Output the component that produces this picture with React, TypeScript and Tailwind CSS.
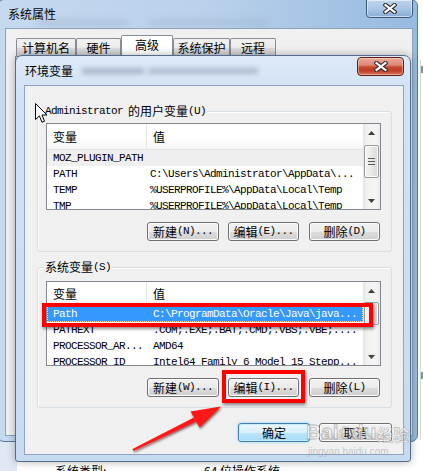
import React from "react";

const CJK = "font-['Noto_Sans_CJK_SC','Noto_Sans',sans-serif]";
const MONO = "font-['Liberation_Mono','DejaVu_Sans_Mono',monospace] text-[11px] tracking-[-0.6px]";

function XGlyph() {
  return (
    <svg width="14" height="11" viewBox="0 0 14 11">
      <path d="M2.5 2 L11.5 9 M11.5 2 L2.5 9" stroke="#2d2d2d" strokeWidth="4.2" strokeLinecap="square" />
      <path d="M2.5 2 L11.5 9 M11.5 2 L2.5 9" stroke="#ffffff" strokeWidth="2.2" strokeLinecap="square" />
    </svg>
  );
}

function Arrow({ up }: { up?: boolean }) {
  return (
    <svg width="7" height="4" viewBox="0 0 7 4">
      <path d={up ? "M0 4L3.5 0L7 4Z" : "M0 0L3.5 4L7 0Z"} fill="#3f3f3f" />
    </svg>
  );
}

function Scrollbar({ thumb, grip }: { thumb: string; grip?: boolean }) {
  return (
    <div className="w-[17px] h-full flex flex-col bg-[linear-gradient(90deg,#e4e4e4,#f2f2f2_25%,#f5f5f5_75%,#eaeaea)]">
      <div className="h-[17px] flex items-center justify-center">
        <Arrow up />
      </div>
      <div
        className={`${thumb} ml-[1px] w-[15px] rounded-[2px] border border-[#9a9a9a] bg-[linear-gradient(90deg,#f4f4f4,#e9e9e9_50%,#d8d8d8)] shadow-[inset_0_0_0_1px_#fbfbfb] flex flex-col items-center justify-center gap-[2px]`}
      >
        {grip && (
          <>
            <div className="w-[7px] h-px bg-[#5a5a5a]" />
            <div className="w-[7px] h-px bg-[#5a5a5a]" />
            <div className="w-[7px] h-px bg-[#5a5a5a]" />
          </>
        )}
      </div>
      <div className="mt-auto h-[17px] flex items-center justify-center">
        <Arrow />
      </div>
    </div>
  );
}

function Header({ h }: { h: string }) {
  return (
    <div className={`${h} shrink-0 flex border-b border-[#e3e3e3] bg-[linear-gradient(180deg,#ffffff_0%,#ffffff_55%,#f4f5f7_100%)] text-[12px]`}>
      <div className="w-[100px] pl-[6px] flex items-center border-r border-[#e5e5e5]">变量</div>
      <div className="pl-[6px] flex items-center">值</div>
    </div>
  );
}

function Row({ a, b, col1, variant }: { a: string; b: string; col1: string; variant?: "gray" | "blue" }) {
  if (variant === "blue") {
    return (
      <div className={`h-[16px] shrink-0 flex items-center whitespace-nowrap bg-[#3399ff] text-white border border-dotted border-[#ffd9a8] ${MONO}`}>
        <div className="w-[105px] pl-[5px]">{a}</div>
        <div>{b}</div>
      </div>
    );
  }
  return (
    <div className={`h-[16px] shrink-0 flex items-center whitespace-nowrap ${variant === "gray" ? "bg-[#efefef]" : ""} ${MONO}`}>
      <div className={`${col1} pl-[6px]`}>{a}</div>
      <div>{b}</div>
    </div>
  );
}

function Btn({ w, children, def }: { w: string; children: React.ReactNode; def?: boolean }) {
  return (
    <div
      className={`${w} h-[19px] rounded-[3px] border flex items-center justify-center text-[12px] leading-none whitespace-nowrap ${
        def
          ? "border-[#3c7fb1] bg-[linear-gradient(180deg,#eaf6fd_0%,#d9f0fc_50%,#bee6fd_51%,#a7d9f5_100%)] shadow-[inset_0_0_0_1px_#c6ecff,0_0_3px_#8fd0f7]"
          : "border-[#707070] bg-[linear-gradient(180deg,#f2f2f2_0%,#ebebeb_50%,#dddddd_51%,#cfcfcf_100%)] shadow-[inset_0_0_0_1px_#fcfcfc]"
      }`}
    >
      {children}
    </div>
  );
}

function Group({ label, children }: { label: React.ReactNode; children: React.ReactNode }) {
  return (
    <div className="relative w-[355px] h-[141px] shrink-0 rounded-[3px] border border-[#d5dfe5] shadow-[inset_1px_1px_0_#ffffff] flex flex-col">
      <div className="absolute left-[6px] top-[-8px] h-[14px] px-[1px] bg-[#f0f0f0] flex items-center text-[12px] leading-[14px] whitespace-nowrap">
        {label}
      </div>
      {children}
    </div>
  );
}

function Tab({ w, children, sel }: { w: string; children: React.ReactNode; sel?: boolean }) {
  return (
    <div
      className={`${w} flex items-center justify-center text-[12px] leading-none border border-b-0 border-[#898c95] rounded-t-[2px] ${
        sel
          ? "h-[21px] bg-white pb-[3px]"
          : "h-[18px] bg-[linear-gradient(180deg,#f2f2f2_0%,#ebebeb_50%,#dddddd_51%,#cfcfcf_100%)]"
      }`}
    >
      {children}
    </div>
  );
}

export default function App() {
  return (
    <div className={`relative w-[423px] h-[471px] overflow-hidden bg-white text-black ${CJK}`}>
      {/* page behind */}
      <div className="absolute left-0 top-0 w-[17px] h-full bg-[#dfe9f5]" />
      <div className="absolute left-[420px] top-[60px] w-px h-[380px] bg-[#cfd3d8]" />
      <div className="absolute left-[421px] top-[66px] w-[2px] h-[7px] bg-[#6b95c9]" />
      <div className="absolute left-[421px] top-[372px] w-[2px] h-[7px] bg-[#6b95c9]" />
      <div className="absolute left-[55px] top-[464px] text-[12px] leading-[14px]">系统类型:</div>
      <div className="absolute left-[204px] top-[464px] text-[12px] leading-[14px]">64 位操作系统</div>

      {/* outer window 系统属性 */}
      <div className="absolute left-[-3px] top-[-1px] w-[421px] h-[443px] rounded-[7px] border border-[#5a7898] bg-[linear-gradient(90deg,#c5d9ef_0%,#b9d1eb_50%,#97badf_100%)] flex flex-col">
        <div className="relative h-[28px] shrink-0 flex items-center pl-[10px] text-[12px]">
          <span className="relative">系统属性</span>
          <div className="absolute left-[40px] top-[20px] w-[90px] h-[5px] bg-[#7c8ea8] opacity-30 blur-[3px]" />
          <div className="absolute left-[150px] top-[20px] w-[120px] h-[5px] bg-[#7c8ea8] opacity-25 blur-[3px]" />
          <div className="absolute right-[4px] top-[-1px] w-[47px] h-[19px] rounded-b-[4px] border border-[#3b5778] bg-[linear-gradient(180deg,rgba(255,255,255,0.35)_0%,rgba(255,255,255,0.15)_50%,rgba(80,120,170,0.25)_100%)] shadow-[inset_0_0_0_1px_rgba(255,255,255,0.55)] flex items-center justify-center">
            <XGlyph />
          </div>
        </div>
        <div className="flex-1 ml-[7px] mr-[4px] mb-[5px] border border-[#8ea2bb] bg-[#f0f0f0] flex flex-col">
          <div className="h-[27px] shrink-0 flex items-end pl-[10px]">
            <Tab w="w-[60px]">计算机名</Tab>
            <Tab w="w-[45px]">硬件</Tab>
            <Tab w="w-[52px]" sel>
              高级
            </Tab>
            <Tab w="w-[57px]">系统保护</Tab>
            <Tab w="w-[46px]">远程</Tab>
          </div>
          <div className="flex-1 ml-[9px] mr-[6px] mb-[3px] border border-[#898c95] bg-white" />
        </div>
      </div>

      {/* 环境变量 dialog */}
      <div className="absolute left-[15px] top-[55px] w-[396px] h-[407px] rounded-t-[7px] rounded-b-[3px] border border-[#536c8b] bg-[linear-gradient(180deg,#dde9f7_0%,#d1e2f4_10%,#c7dbf0_100%)] shadow-[0_0_8px_rgba(0,0,0,0.3)] flex flex-col">
        <div className="relative h-[29px] shrink-0 flex items-center pl-[9px] text-[12px]">
          <span className="relative">环境变量</span>
          <div className="absolute left-[66px] top-[12px] w-[62px] h-[6px] bg-[#5f6f86] opacity-40 blur-[2.5px]" />
          <div className="absolute left-[132px] top-[12px] w-[110px] h-[6px] bg-[#5f6f86] opacity-35 blur-[2.5px]" />
          <div className="absolute left-[341px] top-[1px] w-[47px] h-[19px] rounded-[4px] border border-[#5e2016] bg-[linear-gradient(180deg,#eaaa9c_0%,#dd8a77_40%,#c7462f_55%,#c23d27_75%,#d7765f_100%)] shadow-[inset_0_0_0_1px_rgba(255,220,210,0.5)] flex items-center justify-center">
            <XGlyph />
          </div>
        </div>
        <div className="ml-[8px] mr-[6px] h-[370px] shrink-0 border border-[#8ea3bd] bg-[#f0f0f0] pl-[12px] pt-[25px] flex flex-col">
          {/* user variables */}
          <Group
            label={
              <>
                <span className={MONO}>Administrator</span>
                <span className="ml-[5px]">的用户变量</span>
                <span className={MONO}>(U)</span>
              </>
            }
          >
            <div className="ml-[8px] mt-[11px] w-[335px] h-[87px] border border-[#828790] bg-white flex overflow-hidden">
              <div className="w-[316px] flex flex-col overflow-hidden">
                <Header h="h-[26px]" />
                <Row col1="w-[103px]" a="MOZ_PLUGIN_PATH" b="" variant="gray" />
                <Row col1="w-[103px]" a="PATH" b={"C:\\Users\\Administrator\\AppData\\..."} />
                <Row col1="w-[103px]" a="TEMP" b={"%USERPROFILE%\\AppData\\Local\\Temp"} />
                <Row col1="w-[103px]" a="TMP" b={"%USERPROFILE%\\AppData\\Local\\Temp"} />
              </div>
              <Scrollbar thumb="mt-[4px] h-[33px]" grip />
            </div>
            <div className="mt-[12px] flex justify-end pr-[11px]">
              <Btn w="w-[72px]">
                <span>新建</span>
                <span className={MONO}>(N)...</span>
              </Btn>
              <div className="w-[9px]" />
              <Btn w="w-[71px]">
                <span>编辑</span>
                <span className={MONO}>(E)...</span>
              </Btn>
              <div className="w-[10px]" />
              <Btn w="w-[71px]">
                <span>删除</span>
                <span className={MONO}>(D)</span>
              </Btn>
            </div>
          </Group>

          {/* system variables */}
          <div className="mt-[15px]">
            <Group
              label={
                <>
                  <span>系统变量</span>
                  <span className={MONO}>(S)</span>
                </>
              }
            >
              <div className="ml-[8px] mt-[13px] w-[335px] h-[85px] border border-[#828790] bg-white flex overflow-hidden">
                <div className="w-[316px] flex flex-col overflow-hidden">
                  <Header h="h-[24px]" />
                  <Row col1="w-[106px]" a="Path" b={"C:\\ProgramData\\Oracle\\Java\\java..."} variant="blue" />
                  <Row col1="w-[106px]" a="PATHEXT" b=".COM;.EXE;.BAT;.CMD;.VBS;.VBE;...." />
                  <Row col1="w-[106px]" a="PROCESSOR_AR..." b="AMD64" />
                  <Row col1="w-[106px]" a="PROCESSOR_ID" b="Intel64 Family 6 Model 15 Stepp..." />
                </div>
                <Scrollbar thumb="mt-[3px] h-[23px]" />
              </div>
              <div className="mt-[12px] flex justify-end pr-[11px]">
                <Btn w="w-[72px]">
                  <span>新建</span>
                  <span className={MONO}>(W)...</span>
                </Btn>
                <div className="w-[9px]" />
                <Btn w="w-[71px]">
                  <span>编辑</span>
                  <span className={MONO}>(I)...</span>
                </Btn>
                <div className="w-[10px]" />
                <Btn w="w-[71px]">
                  <span>删除</span>
                  <span className={MONO}>(L)</span>
                </Btn>
              </div>
            </Group>
          </div>

          <div className="mt-[15px] flex justify-end pr-[11px]">
            <Btn w="w-[72px]" def>
              确定
            </Btn>
            <div className="w-[9px]" />
            <Btn w="w-[73px]">取消</Btn>
          </div>
        </div>
      </div>

      {/* red highlight boxes */}
      <div className="absolute left-[42px] top-[303px] w-[331px] h-[24px] border-[4px] border-[#ff0000] shadow-[1px_2px_3px_rgba(0,0,0,0.45)]" />
      <div className="absolute left-[222px] top-[370px] w-[83px] h-[33px] border-[4px] border-[#ff0000] shadow-[1px_2px_3px_rgba(0,0,0,0.45)]" />

      {/* arrow */}
      <svg className="absolute left-0 top-0 pointer-events-none" width="423" height="471" viewBox="0 0 423 471">
        <defs>
          <filter id="sh" x="-20%" y="-20%" width="140%" height="140%">
            <feDropShadow dx="1" dy="1.5" stdDeviation="1" floodColor="#400000" floodOpacity="0.6" />
          </filter>
        </defs>
        <g filter="url(#sh)" fill="#ff1414">
          <path d="M132.6 449.1 L194 417.4 L196 421.4 L133.4 450.9 Z" />
          <path d="M221 406.5 L190.5 411.5 L199.5 427.5 Z" />
        </g>
      </svg>

      {/* mouse cursor */}
      <svg className="absolute left-[35px] top-[103px]" width="13" height="21" viewBox="0 0 13 21">
        <path d="M0.5 0.5 L0.5 16.5 L4.4 12.9 L7 19.2 L9.5 18.2 L7 12 L12 12 Z" fill="#ffffff" stroke="#000000" strokeWidth="1" strokeLinejoin="miter" />
      </svg>

      {/* watermark */}
      <div className="absolute left-[306px] top-[421px] flex items-end pointer-events-none">
        <span className="font-['Liberation_Sans',sans-serif] font-bold text-[21px] leading-none text-white/60 [-webkit-text-stroke:0.8px_rgba(120,120,120,0.5)]">
          Bai
        </span>
        <svg width="12" height="14" viewBox="0 0 12 14" className="mb-[2px] opacity-50">
          <g fill="none" stroke="#888" strokeWidth="1">
            <ellipse cx="6" cy="10" rx="3.5" ry="3" />
            <circle cx="2" cy="5" r="1.5" />
            <circle cx="5" cy="2" r="1.5" />
            <circle cx="8.5" cy="2.5" r="1.5" />
            <circle cx="10.5" cy="6" r="1.3" />
          </g>
        </svg>
        <span className="font-['Liberation_Sans',sans-serif] font-bold text-[21px] leading-none text-white/60 [-webkit-text-stroke:0.8px_rgba(120,120,120,0.5)]">
          du
        </span>
        <span className="ml-[1px] font-bold text-[16px] leading-none text-white/60 [-webkit-text-stroke:0.6px_rgba(120,120,120,0.5)]">
          经验
        </span>
      </div>
      <div className="absolute left-[308px] top-[447px] text-[10px] leading-none font-['Liberation_Sans',sans-serif] text-[#a0a8b0]/60 pointer-events-none">
        jingyan.baidu.com
      </div>
    </div>
  );
}
